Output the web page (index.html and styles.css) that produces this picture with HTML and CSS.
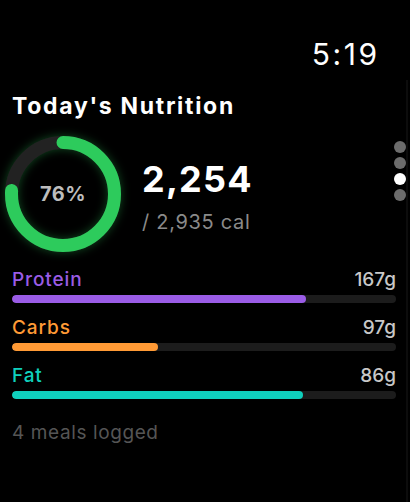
FILE: index.html
```html
<!DOCTYPE html>
<html lang="en">
<head>
<meta charset="utf-8">
<title>Today's Nutrition</title>
<link rel="stylesheet" href="styles.css">
</head>
<body>
<div class="screen">
  <div class="edge"></div>
  <header class="status">
    <span class="time">5:19</span>
  </header>
  <h1 class="title">Today's Nutrition</h1>
  <section class="summary">
    <div class="ring">
      <svg width="126" height="126" viewBox="0 0 126 126">
        <circle class="ring-track" cx="63" cy="63" r="51.5"/>
        <circle class="ring-fill" cx="63" cy="63" r="51.5" stroke-dasharray="245.9 323.6" transform="rotate(-90 63 63)"/>
      </svg>
      <span class="ring-label">76%</span>
    </div>
    <div class="calories">
      <div class="cal-value">2,254</div>
      <div class="cal-goal">/ 2,935 cal</div>
    </div>
  </section>
  <div class="pager">
    <span class="dot"></span>
    <span class="dot"></span>
    <span class="dot active"></span>
    <span class="dot"></span>
  </div>
  <section class="macros">
    <div class="macro">
      <div class="macro-head"><span class="macro-name protein">Protein</span><span class="macro-val">167g</span></div>
      <div class="bar"><div class="bar-fill protein-bg" style="width:76.6%"></div></div>
    </div>
    <div class="macro">
      <div class="macro-head"><span class="macro-name carbs">Carbs</span><span class="macro-val">97g</span></div>
      <div class="bar"><div class="bar-fill carbs-bg" style="width:38%"></div></div>
    </div>
    <div class="macro">
      <div class="macro-head"><span class="macro-name fat">Fat</span><span class="macro-val">86g</span></div>
      <div class="bar"><div class="bar-fill fat-bg" style="width:75.7%"></div></div>
    </div>
  </section>
  <p class="meals">4 meals logged</p>
</div>
</body>
</html>
```
FILE: styles.css
```css
html, body {
  margin: 0;
  padding: 0;
  background: #000;
}
body {
  width: 410px;
  height: 502px;
  overflow: hidden;
  font-family: Inter, "Noto Sans", "Liberation Sans", sans-serif;
  color: #fff;
}
.screen {
  position: relative;
  height: 502px;
  padding: 37px 14px 0 12px;
  box-sizing: border-box;
}
.edge {
  position: absolute;
  right: 2px;
  top: 80px;
  bottom: 0;
  width: 2px;
  background: #0c0c0c;
}
.status {
  display: flex;
  justify-content: flex-end;
  padding-right: 19px;
}
.time {
  font-size: 30px;
  font-weight: 400;
  line-height: 35px;
  letter-spacing: 2.5px;
  margin-right: -2.5px;
}
.title {
  margin: 21px 0 0;
  font-size: 23px;
  font-weight: 700;
  line-height: 27px;
  letter-spacing: 1.7px;
}
.summary {
  display: flex;
  align-items: center;
  margin: 11px 0 0 -12px;
}
.ring {
  position: relative;
  width: 126px;
  height: 126px;
  flex: none;
}
.ring svg {
  display: block;
  filter: drop-shadow(0 0 5px rgba(45, 203, 92, 0.35));
}
.ring-track {
  fill: none;
  stroke: #222;
  stroke-width: 13;
}
.ring-fill {
  fill: none;
  stroke: #2dcb5c;
  stroke-width: 13;
  stroke-linecap: round;
}
.ring-label {
  position: absolute;
  inset: 0;
  display: flex;
  align-items: center;
  justify-content: center;
  font-size: 20px;
  font-weight: 700;
  letter-spacing: 0.5px;
  color: #bdbdbd;
}
.calories {
  margin-left: 16px;
  display: flex;
  flex-direction: column;
  gap: 9px;
  padding-top: 2px;
}
.cal-value {
  font-size: 36px;
  font-weight: 700;
  line-height: 44px;
  letter-spacing: 1.2px;
}
.cal-goal {
  font-size: 20px;
  font-weight: 400;
  line-height: 24px;
  letter-spacing: 0.7px;
  color: #8a8a8a;
}
.pager {
  position: absolute;
  right: 4px;
  top: 141px;
  display: flex;
  flex-direction: column;
  gap: 4px;
}
.dot {
  width: 12px;
  height: 12px;
  border-radius: 50%;
  background: #6c6c6c;
}
.dot.active {
  background: #fff;
}
.macros {
  margin-top: 11px;
  display: flex;
  flex-direction: column;
  gap: 13.5px;
}
.macro-head {
  display: flex;
  justify-content: space-between;
  align-items: baseline;
  font-size: 19px;
  line-height: 23px;
}
.macro-name {
  font-weight: 500;
  letter-spacing: 0.9px;
}
.macro-val {
  font-weight: 500;
  color: #c8c8c8;
}
.protein { color: #9a5ce6; }
.carbs { color: #ff9a35; }
.fat { color: #0fd0bd; }
.protein-bg { background: #9a5ce6; }
.carbs-bg { background: #ff9a35; }
.fat-bg { background: #0fd0bd; }
.bar {
  margin-top: 3.5px;
  height: 8px;
  border-radius: 4px;
  background: #1c1c1c;
  overflow: hidden;
}
.bar-fill {
  height: 100%;
  border-radius: 4px;
}
.meals {
  margin: 22px 0 0;
  font-size: 19px;
  line-height: 23px;
  letter-spacing: 0.6px;
  color: #555;
}
```
